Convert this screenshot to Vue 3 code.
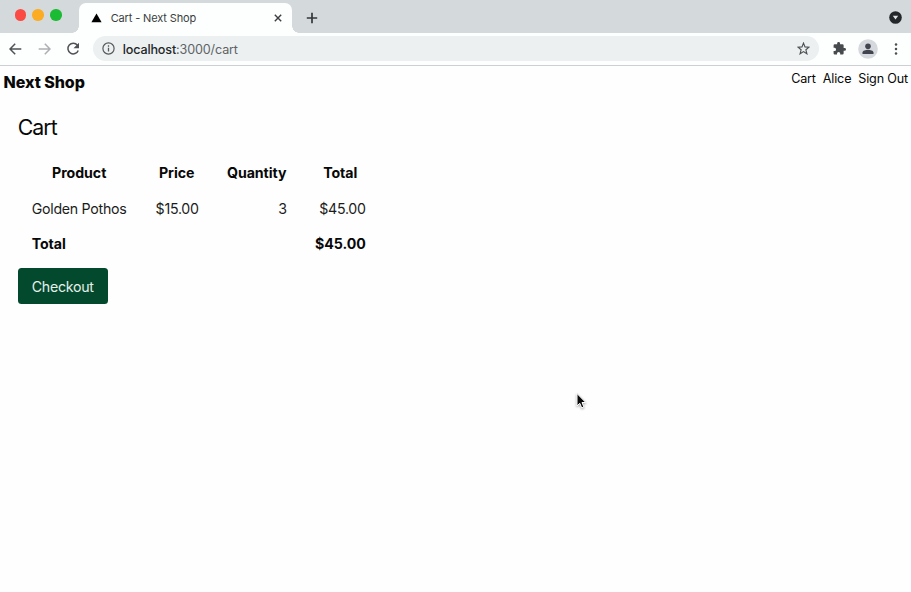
<script setup>
const links = [
  { label: 'Cart', cls: 'link-cart' },
  { label: 'Alice', cls: 'link-user' },
  { label: 'Sign Out', cls: 'link-out' },
]
const items = [{ name: 'Golden Pothos', price: '$15.00', quantity: 3, total: '$45.00' }]
</script>

<template>
  <div class="window">
    <div class="tabstrip">
      <div class="lights">
        <i class="light red"></i><i class="light yellow"></i><i class="light green"></i>
      </div>
      <div class="tab">
        <svg class="favicon" width="11" height="10" viewBox="0 0 11 10"><path d="M5.5 0.5 10.6 9.3H.4z" /></svg>
        <span class="tab-title"><span>Cart - Next Shop</span></span>
        <svg class="close" width="8" height="8" viewBox="0 0 8 8"><path d="M.8.8 7.2 7.2M7.2.8.8 7.2" /></svg>
      </div>
      <svg class="plus" width="12" height="12" viewBox="0 0 12 12"><path d="M6 .8v10.4M.8 6h10.4" /></svg>
      <svg class="tab-search" width="13" height="13" viewBox="0 0 13 13">
        <circle cx="6.5" cy="6.5" r="6.3" fill="#24272a" /><path d="M3.8 4.7h5.4L6.5 8.6z" fill="#dfe4e6" />
      </svg>
    </div>

    <div class="toolbar">
      <svg class="back" width="13" height="12" viewBox="0 0 13 12"><path d="M12.3 6H1.2M6.2.8 1 6l5.2 5.2" /></svg>
      <svg class="forward" width="13" height="12" viewBox="0 0 13 12"><path d="M.7 6h11.1M6.8.8 12 6l-5.2 5.2" /></svg>
      <svg class="reload" width="14" height="14" viewBox="0 0 14 14">
        <path d="M11.4 3.3A5.3 5.3 0 1 0 12.2 8.4" fill="none" stroke="#4f5255" stroke-width="1.5" />
        <path d="M13 .8v5.5H7.5z" fill="#4f5255" />
      </svg>
      <div class="address">
        <svg class="info" width="13" height="13" viewBox="0 0 13 13">
          <circle cx="6.5" cy="6.5" r="5.6" fill="none" stroke="#55595c" stroke-width="1.2" />
          <path d="M6.5 5.8v3.7M6.5 3.3v1.4" stroke="#55595c" stroke-width="1.3" />
        </svg>
        <span class="url"><b>localhost</b>:3000/cart</span>
        <svg class="star" width="13" height="13" viewBox="0 0 13 13">
          <path d="M6.5 1.1 8 4.9l4 .3-3.1 2.6 1 4-3.4-2.2-3.4 2.2 1-4L1 5.2l4-.3z" />
        </svg>
      </div>
      <svg class="puzzle" width="13" height="13" viewBox="0 0 22 22">
        <path d="M19.5 10H18V6a2 2 0 0 0-2-2h-4V2.5a2.5 2.5 0 0 0-5 0V4H3a2 2 0 0 0-2 2v3.8h1.5a2.7 2.7 0 0 1 0 5.4H1V19a2 2 0 0 0 2 2h3.8v-1.5a2.7 2.7 0 0 1 5.4 0V21H16a2 2 0 0 0 2-2v-4h1.5a2.5 2.5 0 0 0 0-5z" />
      </svg>
      <svg class="avatar" width="20" height="20" viewBox="0 0 20 20">
        <circle cx="10" cy="10" r="9.8" fill="#d5d9dd" />
        <circle cx="10" cy="7.3" r="2.8" fill="#41444e" />
        <path d="M4.5 14.9v-1.3c0-1.9 3.4-2.8 5.5-2.8s5.5.9 5.5 2.8v1.3z" fill="#41444e" />
      </svg>
      <svg class="dots" width="4" height="14" viewBox="0 0 4 14">
        <circle cx="2" cy="2.4" r="1.25" /><circle cx="2" cy="7" r="1.25" /><circle cx="2" cy="11.6" r="1.25" />
      </svg>
    </div>

    <header class="site-header">
      <div class="brand">Next Shop</div>
      <nav><a v-for="l in links" :key="l.label" :class="l.cls">{{ l.label }}</a></nav>
    </header>

    <main>
      <h1>Cart</h1>
      <table>
        <colgroup><col class="c1" /><col class="c2" /><col class="c3" /><col class="c4" /></colgroup>
        <thead>
          <tr><th>Product</th><th>Price</th><th>Quantity</th><th>Total</th></tr>
        </thead>
        <tbody>
          <tr v-for="i in items" :key="i.name">
            <td>{{ i.name }}</td><td class="num">{{ i.price }}</td><td class="num">{{ i.quantity }}</td><td class="num">{{ i.total }}</td>
          </tr>
        </tbody>
        <tfoot>
          <tr><th class="left">Total</th><th></th><th></th><th class="num">{{ items[0].total }}</th></tr>
        </tfoot>
      </table>
      <button>Checkout</button>
    </main>

    <svg class="cursor" width="13" height="19" viewBox="0 0 13 19">
      <path d="M2 1.5v12.4l2.8-2.6 1.9 4.6 2.2-.9L7 10.5h3.8z" />
    </svg>
  </div>
</template>

<style>
body { background: #fdfefd; }
</style>

<style scoped>
.window { position: relative; box-sizing: border-box; height: 592px; overflow: hidden; background: #fdfefd; color: #080808; font-family: Inter, "Liberation Sans", sans-serif; font-size: 14.2px; }
svg { display: block; flex: none; }
.tabstrip { display: flex; height: 33px; background: #d4d9dc; }
.lights { display: flex; gap: 6.6px; width: 64.7px; padding: 9.3px 0 0 14.5px; }
.light { width: 11.3px; height: 11.3px; border-radius: 50%; }
.red { background: #fb4a43; }
.yellow { background: #fbac22; }
.green { background: #1bbb34; }
.tab { position: relative; box-sizing: border-box; display: flex; align-items: center; width: 213px; height: 30px; margin-top: 3px; padding: 0 10px 1px 12px; border-radius: 7px 7px 0 0; background: #fdfefe; }
.tab::before, .tab::after { content: ""; position: absolute; bottom: 0; width: 7px; height: 7px; }
.tab::before { left: -7px; background: radial-gradient(circle at 0 0, transparent 6.5px, #fdfefe 7px); }
.tab::after { right: -7px; background: radial-gradient(circle at 100% 0, transparent 6.5px, #fdfefe 7px); }
.favicon { margin-top: 1px; }
.tab-title { flex: 1; margin-left: 8.5px; font-size: 11px; letter-spacing: -0.14px; color: #3b3e41; white-space: nowrap; }
.close { fill: none; stroke: #3c3f42; stroke-width: 1.4; }
.plus { margin: 12px 0 0 14px; fill: none; stroke: #33373a; stroke-width: 1.7; }
.tab-search { margin: 11px 9px 0 auto; }
.toolbar { box-sizing: border-box; display: flex; align-items: center; height: 33px; padding: 0 12px 1px 9.5px; border-bottom: 1px solid #cdd0d2; background: #fdfefe; }
.back, .forward { fill: none; stroke: #4f5255; stroke-width: 1.5; }
.back { margin-left: -0.5px; }
.forward { margin-left: 15.5px; stroke: #adb0b2; }
.reload { margin-left: 15.5px; }
.address { box-sizing: border-box; display: flex; align-items: center; width: 726px; height: 25px; margin-left: 13px; padding: 0 9px; border-radius: 13px; background: #ecf0f1; }
.url { flex: 1; margin-left: 7.7px; padding-top: 1px; font-size: 12.6px; letter-spacing: -0.15px; color: #606366; white-space: nowrap; }
.url b { font-weight: 500; color: #242628; }
.star { fill: none; stroke: #4c5053; stroke-width: 1.15; }
.puzzle { margin-left: 14px; fill: #484b4e; }
.avatar { margin-left: 12px; }
.dots { margin-left: 16px; fill: #4c4f52; }
.site-header { display: flex; justify-content: space-between; padding: 4px 3px 0 3.5px; height: 46px; box-sizing: border-box; }
.brand { font-weight: 800; font-size: 16px; line-height: 24px; letter-spacing: -0.04px; white-space: nowrap; }
nav { display: flex; gap: 7px; font-size: 12.6px; line-height: 18px; letter-spacing: -0.17px; white-space: nowrap; }
main { padding: 0 17.7px; }
h1 { margin: 0; padding-bottom: 28px; font-weight: 400; font-size: 21.3px; line-height: 30px; letter-spacing: -0.95px; height: 43px; box-sizing: border-box; }
table { width: 362px; table-layout: fixed; border-collapse: collapse; }
.c1 { width: 123px; } .c2 { width: 72px; } .c3 { width: 88px; } .c4 { width: 79px; }
th, td { height: 35.5px; box-sizing: border-box; padding: 0 14px; line-height: 21px; white-space: nowrap; }
td { text-align: left; letter-spacing: -0.28px; color: #1c1c1c; }
th { font-weight: 650; letter-spacing: -0.07px; }
.num { text-align: right; }
th.left { text-align: left; }
button { display: block; width: 90px; height: 36px; margin: 6.5px 0 0; padding: 0; border: 0; border-radius: 3.5px; background: #03492d; color: #e5f0ea; font: inherit; letter-spacing: -0.28px; }
.cursor { position: absolute; left: 575px; top: 392px; fill: #0a0a0a; stroke: #fff; stroke-width: 1; filter: drop-shadow(0 1px 1px rgba(0, 0, 0, 0.35)); }
</style>
